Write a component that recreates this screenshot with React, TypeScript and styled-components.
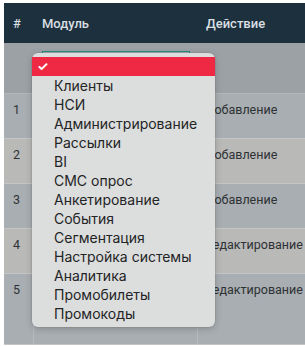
import React from "react"
import styled, { createGlobalStyle } from "styled-components"

const GlobalStyle = createGlobalStyle`
  html, body {
    margin: 0;
    padding: 0;
    background: #ffffff;
  }
  body {
    font-family: Roboto, "Liberation Sans", Arial, sans-serif;
  }
`

const modules = [
  "Клиенты",
  "НСИ",
  "Администрирование",
  "Рассылки",
  "BI",
  "СМС опрос",
  "Анкетирование",
  "События",
  "Сегментация",
  "Настройка системы",
  "Аналитика",
  "Промобилеты",
  "Промокоды",
]

const rows = [
  { id: 1, action: "Добавление", h: 44 },
  { id: 2, action: "Добавление", h: 44 },
  { id: 3, action: "Добавление", h: 44 },
  { id: 4, action: "Редактирование", h: 44 },
  { id: 5, action: "Редактирование", h: 70 },
]

const App = () => {
  return (
    <>
      <GlobalStyle />
      <Page>
        <TableWrap>
          <HeaderRow>
            <HeadCell>#</HeadCell>
            <HeadCell>Модуль</HeadCell>
            <HeadCell>Действие</HeadCell>
          </HeaderRow>
          <FilterRow>
            <FilterCell />
            <FilterCell>
              <SelectBox />
            </FilterCell>
            <FilterCell />
          </FilterRow>
          {rows.map((r, i) => (
            <Row key={r.id} $odd={i % 2 === 0} $h={r.h}>
              <Cell>{r.id}</Cell>
              <Cell />
              <Cell>{r.action}</Cell>
            </Row>
          ))}
          <Popup>
            <Option $active>
              <Check>✓</Check>
            </Option>
            {modules.map(m => (
              <Option key={m}>{m}</Option>
            ))}
          </Popup>
        </TableWrap>
      </Page>
    </>
  )
}

export default App

const Page = styled.div`
  width: 305px;
  height: 346px;
  padding: 3px 0 0 4px;
  box-sizing: border-box;
  overflow: hidden;
`

const TableWrap = styled.div`
  position: relative;
  width: 340px;
`

const grid = `
  display: grid;
  grid-template-columns: 30px 164px 146px;
`

const HeaderRow = styled.div`
  ${grid}
  height: 40px;
  background: #1c313d;
  align-items: center;
`

const HeadCell = styled.div`
  padding-left: 9px;
  font-size: 13px;
  font-weight: 500;
  color: #d9dfe2;
  &:nth-child(2),
  &:nth-child(3) {
    padding-left: 8px;
  }
`

const FilterRow = styled.div`
  ${grid}
  height: 50px;
  background: #9ba1a5;
  border-bottom: 1px solid #b3b7b9;
`

const FilterCell = styled.div`
  padding: 8px 8px 0;
`

const SelectBox = styled.div`
  height: 30px;
  width: 148px;
  box-sizing: border-box;
  border: 1px solid #2c8f7b;
  background: #a6abae;
`

const Row = styled.div<{ $odd: boolean; $h: number }>`
  ${grid}
  height: ${p => p.$h}px;
  background: ${p => (p.$odd ? "#a9aeb2" : "#b9b9b8")};
  border-bottom: 1px solid #c3c5c6;
`

const Cell = styled.div`
  padding: 8px 0 0 9px;
  font-size: 12.5px;
  line-height: 16px;
  color: #2e3234;
  white-space: nowrap;
  border-right: 1px solid rgba(255, 255, 255, 0.18);
  &:nth-child(3) {
    padding-left: 7px;
    border-right: none;
  }
`

const Popup = styled.div`
  position: absolute;
  left: 28px;
  top: 50px;
  width: 183px;
  height: 274px;
  box-sizing: border-box;
  padding-top: 4px;
  background: #dcdddd;
  border-radius: 6px;
  box-shadow: 0 2px 7px rgba(0, 0, 0, 0.2), 0 0 0 0.5px rgba(0, 0, 0, 0.1);
  font-family: Inter, "Liberation Sans", Arial, sans-serif;
`

const Option = styled.div<{ $active?: boolean }>`
  height: 19px;
  line-height: 19px;
  padding-left: 22px;
  font-size: 14px;
  color: #232425;
  background: ${p => (p.$active ? "#ef2944" : "transparent")};
  position: relative;
  white-space: nowrap;
`

const Check = styled.span`
  position: absolute;
  left: 5px;
  top: 0;
  color: #ffffff;
  font-size: 13px;
  font-weight: 700;
`
